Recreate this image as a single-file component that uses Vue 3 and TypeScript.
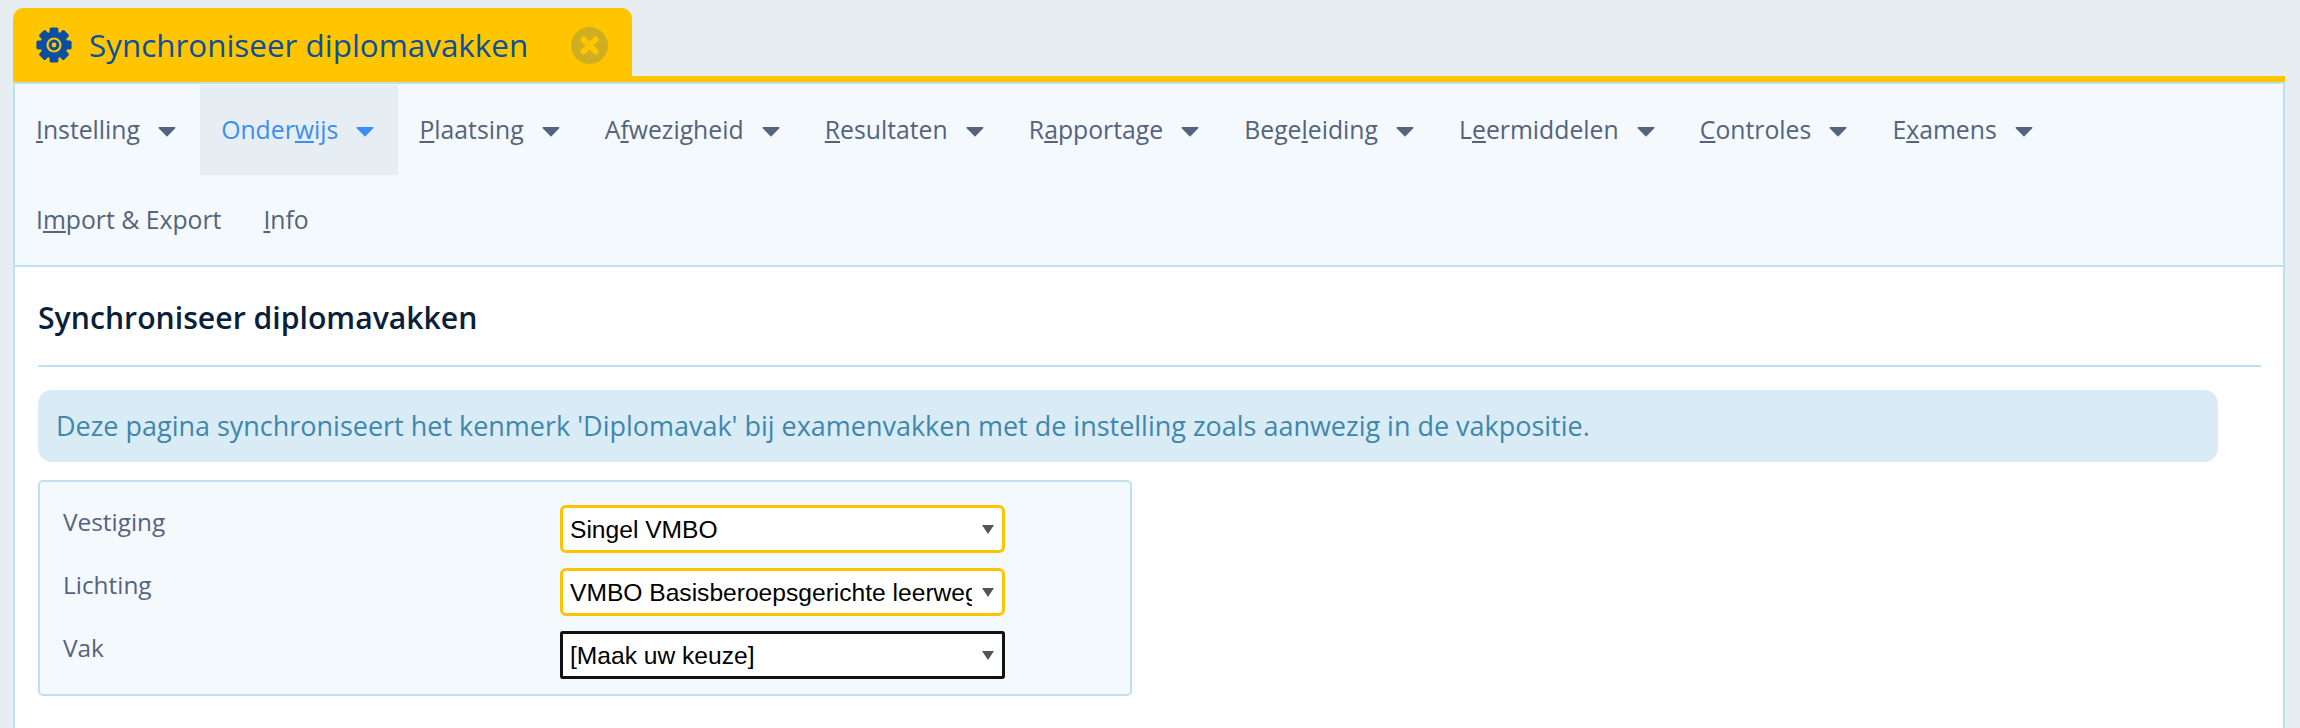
<script setup lang="ts">
interface MenuItem {
  before: string
  key: string
  after: string
  caret: boolean
  active?: boolean
}

const menu: MenuItem[] = [
  { before: '', key: 'I', after: 'nstelling', caret: true },
  { before: 'Onder', key: 'w', after: 'ijs', caret: true, active: true },
  { before: '', key: 'P', after: 'laatsing', caret: true },
  { before: 'A', key: 'f', after: 'wezigheid', caret: true },
  { before: '', key: 'R', after: 'esultaten', caret: true },
  { before: 'R', key: 'a', after: 'pportage', caret: true },
  { before: 'Bege', key: 'l', after: 'eiding', caret: true },
  { before: 'L', key: 'e', after: 'ermiddelen', caret: true },
  { before: '', key: 'C', after: 'ontroles', caret: true },
  { before: 'E', key: 'x', after: 'amens', caret: true },
  { before: 'I', key: 'm', after: 'port & Export', caret: false },
  { before: '', key: 'I', after: 'nfo', caret: false },
]

const fields = [
  { label: 'Vestiging', value: 'Singel VMBO', filled: true },
  { label: 'Lichting', value: 'VMBO Basisberoepsgerichte leerweg', filled: true },
  { label: 'Vak', value: '[Maak uw keuze]', filled: false },
]

const teeth = [0, 45, 90, 135, 180, 225, 270, 315]
</script>

<template>
  <div class="page">
    <div class="tab">
      <svg class="gear" viewBox="0 0 36 36" aria-hidden="true">
        <rect
          v-for="angle in teeth"
          :key="angle"
          x="13.6"
          y="0.4"
          width="8.8"
          height="9"
          rx="1.6"
          :transform="`rotate(${angle} 18 18)`"
        />
        <circle cx="18" cy="18" r="13.6" />
        <circle class="gear-hole" cx="18" cy="18" r="7.6" />
        <circle cx="18" cy="18" r="5.4" />
        <circle class="gear-hole" cx="18" cy="18" r="2.4" />
      </svg>
      <span class="tab-title">Synchroniseer diplomavakken</span>
      <button class="tab-close" type="button" aria-label="Sluiten">
        <svg viewBox="0 0 37 37" aria-hidden="true">
          <path d="M12.5 12.5 24.5 24.5M24.5 12.5 12.5 24.5" />
        </svg>
      </button>
    </div>

    <div class="panel">
      <nav class="menu">
        <a
          v-for="item in menu"
          :key="item.before + item.key + item.after"
          class="menu-item"
          :class="{ active: item.active }"
        >
          <span>{{ item.before }}<u>{{ item.key }}</u>{{ item.after }}</span>
          <svg v-if="item.caret" class="caret" viewBox="0 0 18 11" aria-hidden="true">
            <path d="M1.2 1h15.6a.7.7 0 0 1 .5 1.2L9.5 10.2a.7.7 0 0 1-1 0L.7 2.2A.7.7 0 0 1 1.2 1Z" />
          </svg>
        </a>
      </nav>

      <main class="content">
        <h1 class="heading">Synchroniseer diplomavakken</h1>
        <p class="alert">Deze pagina synchroniseert het kenmerk 'Diplomavak' bij examenvakken met de instelling zoals aanwezig in de vakpositie.</p>

        <form class="form">
          <template v-for="field in fields" :key="field.label">
            <label class="label">{{ field.label }}</label>
            <div class="select-wrap">
              <select class="select" :class="{ filled: field.filled }">
                <option>{{ field.value }}</option>
              </select>
              <svg class="select-arrow" viewBox="0 0 12 9" aria-hidden="true">
                <path d="M0 0h12L6 9Z" />
              </svg>
            </div>
          </template>
        </form>
      </main>
    </div>
  </div>
</template>

<style>
html,
body {
  margin: 0;
  background: #e6eef1;
}
</style>

<style scoped>
.page {
  box-sizing: border-box;
  height: 728px;
  padding: 8px 15px 0 13px;
  overflow: hidden;
  font-family: "Open Sans", "Noto Sans", sans-serif;
  display: flex;
  flex-direction: column;
}

.tab {
  box-sizing: border-box;
  flex: none;
  width: 619px;
  height: 68px;
  padding: 6px 0 0 23px;
  display: flex;
  align-items: center;
  background: #ffc600;
  border-radius: 10px 10px 0 0;
}

.gear {
  width: 36px;
  height: 36px;
  fill: #0a4fa0;
}

.gear-hole {
  fill: #ffc600;
}

.tab-title {
  width: 439px;
  margin: -2px 0 0 17px;
  font-size: 31.4px;
  color: #0a4fa0;
  white-space: nowrap;
}

.tab-close {
  width: 37px;
  height: 37px;
  margin-left: 43px;
  padding: 0;
  border: 0;
  border-radius: 50%;
  background: #cfae1f;
}

.tab-close svg {
  display: block;
  width: 37px;
  height: 37px;
  fill: none;
  stroke: #ffc600;
  stroke-width: 6;
  stroke-linecap: round;
}

.panel {
  flex: 1;
  display: flex;
  flex-direction: column;
  border-top: 6px solid #ffc600;
}

.menu {
  display: flex;
  flex-wrap: wrap;
  padding: 1px 40px 0 0;
  background: #f4f9fd;
  border: 2px solid #bfe0ee;
  font-size: 24.75px;
  color: #55637d;
}

.menu-item {
  box-sizing: border-box;
  height: 90px;
  padding: 0 21px 2px;
  display: flex;
  align-items: center;
  gap: 18px;
  white-space: nowrap;
}

.menu-item:has(.caret) {
  padding-right: 24.2px;
}

.menu-item.active {
  color: #3a8ff0;
  background: #e6eef3;
}

.caret {
  flex: none;
  width: 18px;
  height: 11px;
  margin-top: 4px;
  fill: currentColor;
}

.content {
  flex: 1;
  padding: 0 22px 0 23px;
  background: #fff;
  border: solid #bfe0ee;
  border-width: 0 2px;
}

.heading {
  margin: 0;
  height: 100px;
  box-sizing: border-box;
  padding-top: 27px;
  font-size: 30.2px;
  line-height: 48px;
  font-weight: 600;
  color: #0a1f3a;
  border-bottom: 2px solid #bfe0ee;
}

.alert {
  box-sizing: border-box;
  width: 2180px;
  height: 72px;
  margin: 23px 0 18px;
  padding: 0 18px;
  border-radius: 14px;
  background: #d9ecf5;
  color: #3f87ad;
  font-size: 26.97px;
  line-height: 72px;
  white-space: nowrap;
}

.form {
  box-sizing: border-box;
  width: 1094px;
  padding: 23px 22px 15px 23px;
  display: grid;
  grid-template-columns: 497px 445px;
  row-gap: 15px;
  background: #f4f9fd;
  border: 2px solid #bfe0ee;
  border-radius: 5px;
}

.label {
  font-size: 24.4px;
  line-height: 34px;
  color: #55637d;
}

.select-wrap {
  position: relative;
  height: 48px;
}

.select {
  box-sizing: border-box;
  display: block;
  width: 100%;
  height: 100%;
  padding: 0 30px 0 7px;
  appearance: none;
  background: #fff;
  border: 3px solid #ffc400;
  border-radius: 6px;
  color: #000;
  font-family: "Liberation Sans", Arial, sans-serif;
  font-size: 24.6px;
}

.select:not(.filled) {
  border-radius: 3px;
  outline: 3px solid #111;
  outline-offset: -3px;
}

.select-arrow {
  position: absolute;
  top: 20px;
  right: 11px;
  width: 12px;
  height: 9px;
  fill: #555;
  pointer-events: none;
}
</style>
